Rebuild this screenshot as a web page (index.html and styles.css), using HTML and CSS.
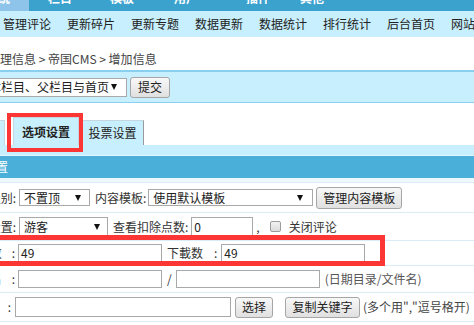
FILE: index.html
```html
<!DOCTYPE html>
<html lang="zh-CN">
<head>
<meta charset="utf-8">
<title>增加信息</title>
<link rel="stylesheet" href="styles.css">
</head>
<body>
<div class="page">
  <nav class="topnav">
    <span class="tn tn-active">系统</span>
    <span class="tn tn-lm">栏目</span>
    <span class="tn tn-mb">模板</span>
    <span class="tn tn-yh">用户</span>
    <span class="tn tn-cj">插件</span>
    <span class="tn tn-qt">其他</span>
  </nav>
  <nav class="subnav">
    <a>管理评论</a>
    <a>更新碎片</a>
    <a>更新专题</a>
    <a>数据更新</a>
    <a>数据统计</a>
    <a>排行统计</a>
    <a>后台首页</a>
    <a>网站首页</a>
  </nav>
  <div class="crumb">管理信息 &gt; 帝国CMS &gt; 增加信息</div>
  <div class="formbar">
    <div class="select sel-refresh"><span>本栏目、父栏目与首页</span><i class="arrow"></i></div>
    <button class="btn btn-submit">提交</button>
  </div>
  <div class="tabs">
    <div class="tab tab-first">基本信息</div>
    <div class="tab tab-active">选项设置</div>
    <div class="tab tab-vote">投票设置</div>
  </div>
  <div class="tabstrip"></div>
  <div class="header">选项设置</div>
  <div class="rows">
    <div class="row row-1">
      <span class="lbl">置顶级别:</span>
      <div class="select sel-top"><span>不置顶</span><i class="arrow"></i></div>
      <span class="t-tpl">内容模板:</span>
      <div class="select sel-tpl"><span>使用默认模板</span><i class="arrow"></i></div>
      <button class="btn btn-tpl">管理内容模板</button>
    </div>
    <div class="row row-2">
      <span class="lbl">权限设置:</span>
      <div class="select sel-view"><span>游客</span><i class="arrow"></i></div>
      <span class="t-pts">查看扣除点数:</span>
      <span class="inp inp-pts">0</span>
      <span class="t-comma">,</span>
      <span class="chk"></span>
      <span class="t-close">关闭评论</span>
    </div>
    <div class="row row-3">
      <span class="lbl">点击数<span class="colon">:</span></span>
      <span class="inp inp-half">49</span>
      <span class="t-dl">下載数</span><span class="colon2">:</span>
      <span class="inp inp-half inp-dl">49</span>
    </div>
    <div class="row row-4">
      <span class="lbl">文件名<span class="colon">:</span></span>
      <span class="inp inp-half"></span>
      <span class="t-slash">/</span>
      <span class="inp inp-half inp-fn"></span>
      <span class="t-note">(日期目录/文件名)</span>
    </div>
    <div class="row row-5">
      <span class="lbl">关键字<span class="colon">:</span></span>
      <span class="inp inp-kw"></span>
      <button class="btn btn-pick">选择</button>
      <button class="btn btn-copy">复制关键字</button>
      <span class="t-hint">(多个用","逗号格开)</span>
    </div>
  </div>
  <div class="mark mark-tab"></div>
  <div class="mark mark-row"></div>
</div>
</body>
</html>
```
FILE: styles.css
```css
* { box-sizing: border-box; }
html, body { margin: 0; padding: 0; }
body {
  width: 474px;
  height: 325px;
  overflow: hidden;
  background: #fff;
  font-family: "Noto Sans CJK SC", "Noto Sans", sans-serif;
  font-size: 12px;
  color: #333;
}
.page { position: relative; width: 474px; height: 325px; overflow: hidden; }

/* top navigation (cut at the top edge) */
.topnav {
  display: flex;
  height: 19px;
  margin-top: -8px;
  background: #3ba1cd;
  white-space: nowrap;
}
.tn {
  flex: none;
  width: 24px;
  line-height: 12px;
  text-align: center;
  color: #fff;
  font-weight: bold;
}
.tn-active { width: 62px; margin-left: -33px; background: #8ec4ea; }
.tn-lm { margin-left: 19px; }
.tn-mb { margin-left: 38px; }
.tn-yh { margin-left: 40px; }
.tn-cj { margin-left: 48px; }
.tn-qt { margin-left: 30px; }

.subnav {
  display: flex;
  align-items: center;
  gap: 16px;
  height: 26px;
  padding-left: 3px;
  background: #c8effd;
  line-height: 14px;
  white-space: nowrap;
}
.subnav a { flex: none; color: #222; }

.crumb {
  height: 33px;
  padding-top: 15px;
  margin-left: -12px;
  line-height: 14px;
  color: #444;
  white-space: nowrap;
}

.formbar {
  display: flex;
  align-items: center;
  height: 33px;
  border-top: 2px solid #8ad0ee;
  border-bottom: 1px solid #8ad0ee;
  background: #c8effd;
}

.select {
  flex: none;
  display: flex;
  align-items: center;
  justify-content: space-between;
  background: #fff;
  border: 1px solid #a9a9a9;
  padding: 0 8px 0 4px;
  line-height: 14px;
  color: #222;
  white-space: nowrap;
  overflow: hidden;
}
.arrow {
  flex: none;
  width: 0;
  height: 0;
  border-left: 3px solid transparent;
  border-right: 3px solid transparent;
  border-top: 6px solid #111;
}
.sel-refresh { width: 142px; height: 19px; margin-left: -15px; padding-left: 3px; padding-right: 9px; }

.btn {
  flex: none;
  font: inherit;
  font-size: 12px;
  line-height: 14px;
  color: #222;
  padding: 0;
  border: 1px solid #a6a6a6;
  border-radius: 3px;
  background: linear-gradient(#f8f8f8, #e0e0e0);
  white-space: nowrap;
}
.btn-submit { width: 40px; height: 21px; margin-left: 3px; }

.tabs { display: flex; align-items: flex-end; height: 42px; white-space: nowrap; }
.tab {
  flex: none;
  display: flex;
  align-items: center;
  justify-content: center;
  background: #c8effd;
  border: 1px solid #c4d6df;
  border-bottom: none;
  line-height: 14px;
  color: #222;
}
.tab-first { width: 66px; height: 25px; margin-left: -61px; }
.tab-active { width: 66px; height: 28px; margin-left: 8px; font-weight: bold; }
.tab-vote { width: 63px; height: 25px; margin-left: 2px; border-right-color: #9a9a9a; }

.tabstrip { height: 11px; background: #c8effd; border-bottom: 1px solid #e6f6fd; }
.header {
  height: 22px;
  background: #4bb0d9;
  color: #fff;
  line-height: 22px;
  text-indent: -40px;
  white-space: nowrap;
}

.rows { border-top: 4px solid #eef7fc; }
.row {
  display: flex;
  align-items: center;
  margin-left: -84px;
  border-top: 1px solid #d9ecf8;
  line-height: 14px;
  white-space: nowrap;
  color: #333;
}
.row > * { flex: none; }
.row-1 { height: 30px; }
.row-2 { height: 28px; }
.row-3 { height: 25px; }
.row-4 { height: 27px; }
.row-5 { height: 30px; border-bottom: 1px solid #d9ecf8; }

.lbl { width: 100px; text-align: right; }
.row-3 .lbl, .row-4 .lbl { width: 99px; }
.row-5 .lbl { width: 95px; }
.colon { margin-left: 10px; }

.inp {
  display: flex;
  align-items: center;
  height: 18px;
  border: 1px solid #a9a9a9;
  padding: 0 2px;
  background: #fff;
  color: #222;
}

.sel-top { width: 71px; height: 17px; margin-left: 3px; }
.t-tpl { margin-left: 5px; }
.sel-tpl { width: 165px; height: 17px; margin-left: 2px; padding-right: 9px; }
.btn-tpl { width: 86px; height: 22px; margin-left: 3px; }

.sel-view { width: 89px; height: 19px; margin-left: 3px; padding-right: 7px; }
.t-pts { margin-left: 5px; }
.inp-pts { width: 62px; height: 19px; margin-left: 3px; }
.t-comma { margin-left: 3px; }
.chk {
  width: 11px;
  height: 11px;
  margin-left: 10px;
  border: 1px solid #9c9c9c;
  border-radius: 2px;
  background: linear-gradient(#f2f2f2, #dcdcdc);
}
.t-close { margin-left: 8px; }

.inp-half { width: 144px; margin-left: 3px; }
.t-dl { margin-left: 5px; }
.colon2 { margin-left: 11px; }
.inp-dl { margin-left: 4px; }

.t-slash { margin-left: 5px; }
.inp-fn { margin-left: 4px; }
.t-note { margin-left: 5px; color: #555; }

.inp-kw { width: 216px; height: 20px; margin-left: 4px; }
.btn-pick { width: 38px; height: 21px; margin-left: 4px; }
.btn-copy { width: 75px; height: 21px; margin-left: 12px; }
.t-hint { margin-left: 3px; color: #444; }

/* red annotation boxes drawn over the screenshot */
.mark { position: absolute; border: 4px solid #fc3535; pointer-events: none; }
.mark-tab { left: 7px; top: 113px; width: 76px; height: 39px; }
.mark-row { left: -5px; top: 235px; width: 390px; height: 31px; border-width: 5px; }
```
